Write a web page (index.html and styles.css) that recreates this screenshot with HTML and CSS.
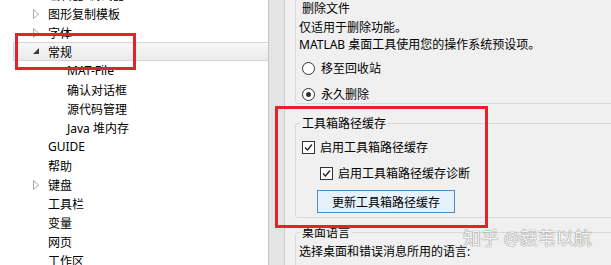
FILE: index.html
```html
<!DOCTYPE html>
<html lang="zh-CN">
<head>
    <meta charset="UTF-8">
    <title>预设项 - 常规</title>
    <link rel="stylesheet" href="styles.css">
</head>
<body>

<div class="window">
    <ul class="tree">
        <li class="row"><span class="toggle"></span>编辑器/调试器</li>
        <li class="row"><span class="toggle"><svg width="7" height="10" viewBox="0 0 7 10"><polygon points="0.5,0.5 5.5,5 0.5,9.5" fill="#fff" stroke="#a8a8a8"/></svg></span>图形复制模板</li>
        <li class="row"><span class="toggle"><svg width="7" height="10" viewBox="0 0 7 10"><polygon points="0.5,0.5 5.5,5 0.5,9.5" fill="#fff" stroke="#a8a8a8"/></svg></span>字体</li>
        <li class="row selected"><span class="toggle"><svg width="7" height="7" viewBox="0 0 7 7"><polygon points="6,0 6,6 0,6" fill="#3c3c3c"/></svg></span>常规</li>
        <li class="row child"><span class="toggle"></span>MAT-File</li>
        <li class="row child"><span class="toggle"></span>确认对话框</li>
        <li class="row child"><span class="toggle"></span>源代码管理</li>
        <li class="row child"><span class="toggle"></span>Java 堆内存</li>
        <li class="row"><span class="toggle"></span>GUIDE</li>
        <li class="row"><span class="toggle"></span>帮助</li>
        <li class="row"><span class="toggle"><svg width="7" height="10" viewBox="0 0 7 10"><polygon points="0.5,0.5 5.5,5 0.5,9.5" fill="#fff" stroke="#a8a8a8"/></svg></span>键盘</li>
        <li class="row"><span class="toggle"></span>工具栏</li>
        <li class="row"><span class="toggle"></span>变量</li>
        <li class="row"><span class="toggle"></span>网页</li>
        <li class="row"><span class="toggle"></span>工作区</li>
    </ul>

    <div class="splitter"></div>

    <div class="prefs">
        <div class="group first">
            <p class="subhead">删除文件</p>
            <p class="line">仅适用于删除功能。</p>
            <p class="line">MATLAB 桌面工具使用您的操作系统预设项。</p>
            <label class="option first-option"><span class="radio"></span>移至回收站</label>
            <label class="option"><span class="radio checked"></span>永久删除</label>
        </div>

        <fieldset class="group cache">
            <legend>工具箱路径缓存</legend>
            <label class="option"><span class="check"><svg width="11" height="11" viewBox="0 0 11 11"><polyline points="2,5.5 4.5,8 9,2.5" fill="none" stroke="#222" stroke-width="1.3"/></svg></span>启用工具箱路径缓存</label>
            <label class="option indent"><span class="check"><svg width="11" height="11" viewBox="0 0 11 11"><polyline points="2,5.5 4.5,8 9,2.5" fill="none" stroke="#222" stroke-width="1.3"/></svg></span>启用工具箱路径缓存诊断</label>
            <button class="btn">更新工具箱路径缓存</button>
        </fieldset>

        <fieldset class="group lang">
            <legend>桌面语言</legend>
            <p class="line">选择桌面和错误消息所用的语言:</p>
        </fieldset>
    </div>

    <!-- annotations drawn over the screenshot -->
    <div class="mark mark-tree"></div>
    <div class="mark mark-cache"></div>
    <div class="watermark">知乎 @毅苇以航</div>
</div>

</body>
</html>
```

FILE: styles.css
```css
body {
    margin: 0;
    font-family: "Noto Sans", "Noto Sans CJK SC", sans-serif;
    font-size: 12px;
    color: #000;
}
.window {
    position: relative;
    display: flex;
    width: 611px;
    height: 265px;
    overflow: hidden;
    background-color: #f0f0f0;
}
.tree {
    list-style: none;
    margin: -15px 0 0 0;
    padding: 0;
    width: 268px;
    flex-shrink: 0;
    background-color: #fff;
    border-right: 1px solid #c4c4c4;
}
.row {
    display: flex;
    align-items: center;
    height: 19px;
    padding-left: 31px;
    box-sizing: border-box;
    white-space: nowrap;
}
.row.child {
    padding-left: 50px;
}
.row.selected {
    margin-left: 13px;
    padding-left: 17px;
    border: 1px solid #d6d6d6;
    border-right: none;
    background: linear-gradient(#f7f7f7, #ebebeb);
}
.toggle {
    display: flex;
    align-items: center;
    width: 17px;
    height: 19px;
    padding-left: 2px;
    box-sizing: border-box;
}
.splitter {
    width: 15px;
    flex-shrink: 0;
    background-color: #e4e4e4;
    border-right: 1px solid #cdcdcd;
}
.prefs {
    flex: 1;
    padding-left: 10px;
    margin-right: -6px;
}
.group {
    border: 1px solid #d9d9d9;
    border-radius: 3px;
    margin: 0;
    padding: 0 3px;
}
.group.first {
    margin-top: -10px;
    padding-top: 9px;
    border-top-left-radius: 0;
    height: 114px;
    box-sizing: border-box;
}
.group p {
    margin: 0;
    line-height: 17px;
}
.subhead {
    padding-left: 3px;
    margin-bottom: 2px !important;
}
.line {
    line-height: 17px;
}
.option {
    display: flex;
    align-items: center;
    height: 20px;
    margin-top: 6px;
    padding-left: 3px;
    white-space: nowrap;
}
.first-option {
    margin-top: 5px;
}
.radio {
    width: 11px;
    height: 11px;
    border: 1px solid #333;
    border-radius: 50%;
    background-color: #fff;
    margin-right: 6px;
    display: flex;
    align-items: center;
    justify-content: center;
}
.radio.checked::after {
    content: "";
    width: 5px;
    height: 5px;
    border-radius: 50%;
    background-color: #333;
}
.check {
    width: 11px;
    height: 11px;
    border: 1px solid #333;
    background-color: #fff;
    margin-right: 5px;
    display: flex;
    align-items: center;
    justify-content: center;
}
.cache {
    margin-top: 11px;
    padding-bottom: 4px;
}
.cache .option:first-of-type {
    margin-top: 5px;
}
.cache .option.indent {
    margin-top: 6px;
}
.indent {
    padding-left: 21px;
}
legend {
    padding: 0 2px;
    line-height: 17px;
    margin-left: 1px;
}
.btn {
    display: block;
    margin: 7px 0 0 18px;
    width: 138px;
    height: 23px;
    padding: 0;
    font-family: inherit;
    font-size: 12px;
    color: #000;
    background-color: #e5f1fb;
    border: 1px solid #4b8cc2;
}
.lang {
    margin-top: 6px;
    height: 60px;
}
.lang .line {
    margin-top: 2px;
}
.mark {
    position: absolute;
    border: 3px solid #e3222a;
}
.mark-tree {
    left: 15px;
    top: 33px;
    width: 115px;
    height: 31px;
}
.mark-cache {
    left: 275px;
    top: 106px;
    width: 207px;
    height: 116px;
}
.watermark {
    position: absolute;
    left: 463px;
    top: 227px;
    font-size: 18px;
    line-height: 22px;
    color: rgba(255, 255, 255, 0.95);
    text-shadow: 0 0 1px rgba(0, 0, 0, 0.5), 0 0 1px rgba(0, 0, 0, 0.3);
    white-space: nowrap;
}
```
